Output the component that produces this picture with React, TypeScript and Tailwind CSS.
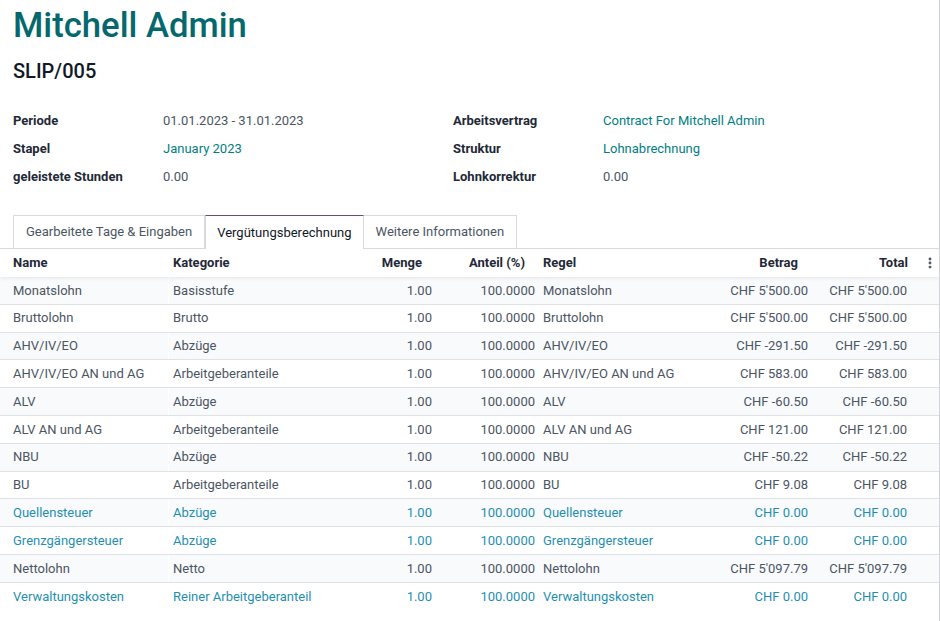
import { EllipsisVertical } from "lucide-react";

type Zeile = {
  name: string;
  kategorie: string;
  regel: string;
  betrag: string;
  total: string;
  info?: boolean;
};

const zeilen: Zeile[] = [
  { name: "Monatslohn", kategorie: "Basisstufe", regel: "Monatslohn", betrag: "CHF 5'500.00", total: "CHF 5'500.00" },
  { name: "Bruttolohn", kategorie: "Brutto", regel: "Bruttolohn", betrag: "CHF 5'500.00", total: "CHF 5'500.00" },
  { name: "AHV/IV/EO", kategorie: "Abzüge", regel: "AHV/IV/EO", betrag: "CHF -291.50", total: "CHF -291.50" },
  { name: "AHV/IV/EO AN und AG", kategorie: "Arbeitgeberanteile", regel: "AHV/IV/EO AN und AG", betrag: "CHF 583.00", total: "CHF 583.00" },
  { name: "ALV", kategorie: "Abzüge", regel: "ALV", betrag: "CHF -60.50", total: "CHF -60.50" },
  { name: "ALV AN und AG", kategorie: "Arbeitgeberanteile", regel: "ALV AN und AG", betrag: "CHF 121.00", total: "CHF 121.00" },
  { name: "NBU", kategorie: "Abzüge", regel: "NBU", betrag: "CHF -50.22", total: "CHF -50.22" },
  { name: "BU", kategorie: "Arbeitgeberanteile", regel: "BU", betrag: "CHF 9.08", total: "CHF 9.08" },
  { name: "Quellensteuer", kategorie: "Abzüge", regel: "Quellensteuer", betrag: "CHF 0.00", total: "CHF 0.00", info: true },
  { name: "Grenzgängersteuer", kategorie: "Abzüge", regel: "Grenzgängersteuer", betrag: "CHF 0.00", total: "CHF 0.00", info: true },
  { name: "Nettolohn", kategorie: "Netto", regel: "Nettolohn", betrag: "CHF 5'097.79", total: "CHF 5'097.79" },
  { name: "Verwaltungskosten", kategorie: "Reiner Arbeitgeberanteil", regel: "Verwaltungskosten", betrag: "CHF 0.00", total: "CHF 0.00", info: true },
];

function Feld({ label, wert, link }: { label: string; wert: string; link?: boolean }) {
  return (
    <div className="flex h-[28px] items-center">
      <span className="w-[150px] font-bold text-[#1f2937]">{label}</span>
      <span className={link ? "text-[#017e84]" : "text-[#4b5563]"}>{wert}</span>
    </div>
  );
}

export default function App() {
  return (
    <div
      className="h-[621px] w-full overflow-hidden border-r border-[#cfd2d6] bg-white text-[13px]"
      style={{ fontFamily: "Roboto, 'Liberation Sans', sans-serif" }}
    >
      <div className="px-[13px]">
        <h1 className="pt-[2px] text-[34.7px] font-medium leading-[46px] text-[#05686d]">
          Mitchell Admin
        </h1>
        <h2 className="mt-[10px] text-[20px] font-medium leading-[26px] text-[#111827]">
          SLIP/005
        </h2>

        <div className="mt-[23px] grid grid-cols-[440px_1fr]">
          <div>
            <Feld label="Periode" wert="01.01.2023 - 31.01.2023" />
            <Feld label="Stapel" wert="January 2023" link />
            <Feld label="geleistete Stunden" wert="0.00" />
          </div>
          <div>
            <Feld label="Arbeitsvertrag" wert="Contract For Mitchell Admin" link />
            <Feld label="Struktur" wert="Lohnabrechnung" link />
            <Feld label="Lohnkorrektur" wert="0.00" />
          </div>
        </div>
      </div>

      <div className="mt-[24px] flex border-b border-[#d8dadd] pl-[13px]">
        <div className="-mb-px flex h-[34px] items-center border border-[#d8dadd] px-[12px] text-[#4b5563]">
          Gearbeitete Tage &amp; Eingaben
        </div>
        <div className="-mb-px flex h-[34px] items-center border-x border-t border-x-[#d8dadd] border-t-[#714b67] bg-white px-[11px] text-[#111827]">
          Vergütungsberechnung
        </div>
        <div className="-mb-px flex h-[34px] items-center border border-l-0 border-[#d8dadd] px-[12px] text-[#4b5563]">
          Weitere Informationen
        </div>
      </div>

      <div className="relative z-10 flex h-[28px] items-center font-bold text-[#1f2937] shadow-[0_2px_3px_rgba(0,0,0,0.06)]">
        <div className="w-[168px] pl-[13px]">Name</div>
        <div className="w-[204px] pl-[5px]">Kategorie</div>
        <div className="w-[65px] pr-[15px] text-right">Menge</div>
        <div className="w-[103px] pr-[15px] text-right">Anteil (%)</div>
        <div className="w-[160px] pl-[3px]">Regel</div>
        <div className="w-[113px] pr-[15px] text-right">Betrag</div>
        <div className="w-[99px] pr-[4px] text-right">Total</div>
        <div className="flex flex-1 justify-end pr-[2px]">
          <EllipsisVertical size={14} strokeWidth={3} className="text-[#4b5563]" />
        </div>
      </div>

      <div>
        {zeilen.map((z, i) => (
          <div
            key={z.name}
            className={`flex h-[27.8px] items-center border-b border-[#dfe1e4] ${
              i % 2 === 0 ? "bg-[#f9fafb]" : "bg-white"
            } ${i === zeilen.length - 1 ? "border-b-0" : ""} ${
              z.info ? "text-[#1f8fb0]" : "text-[#4b5563]"
            }`}
          >
            <div className="w-[168px] pl-[13px]">{z.name}</div>
            <div className="flex h-full w-[204px] items-center border-l border-white pl-[4px]">{z.kategorie}</div>
            <div className="w-[65px] pr-[5px] text-right">1.00</div>
            <div className="w-[103px] pr-[5px] text-right">100.0000</div>
            <div className="w-[160px] pl-[3px]">{z.regel}</div>
            <div className="w-[113px] pr-[5px] text-right">{z.betrag}</div>
            <div className="w-[99px] pr-[5px] text-right">{z.total}</div>
            <div className="flex-1" />
          </div>
        ))}
      </div>
    </div>
  );
}
